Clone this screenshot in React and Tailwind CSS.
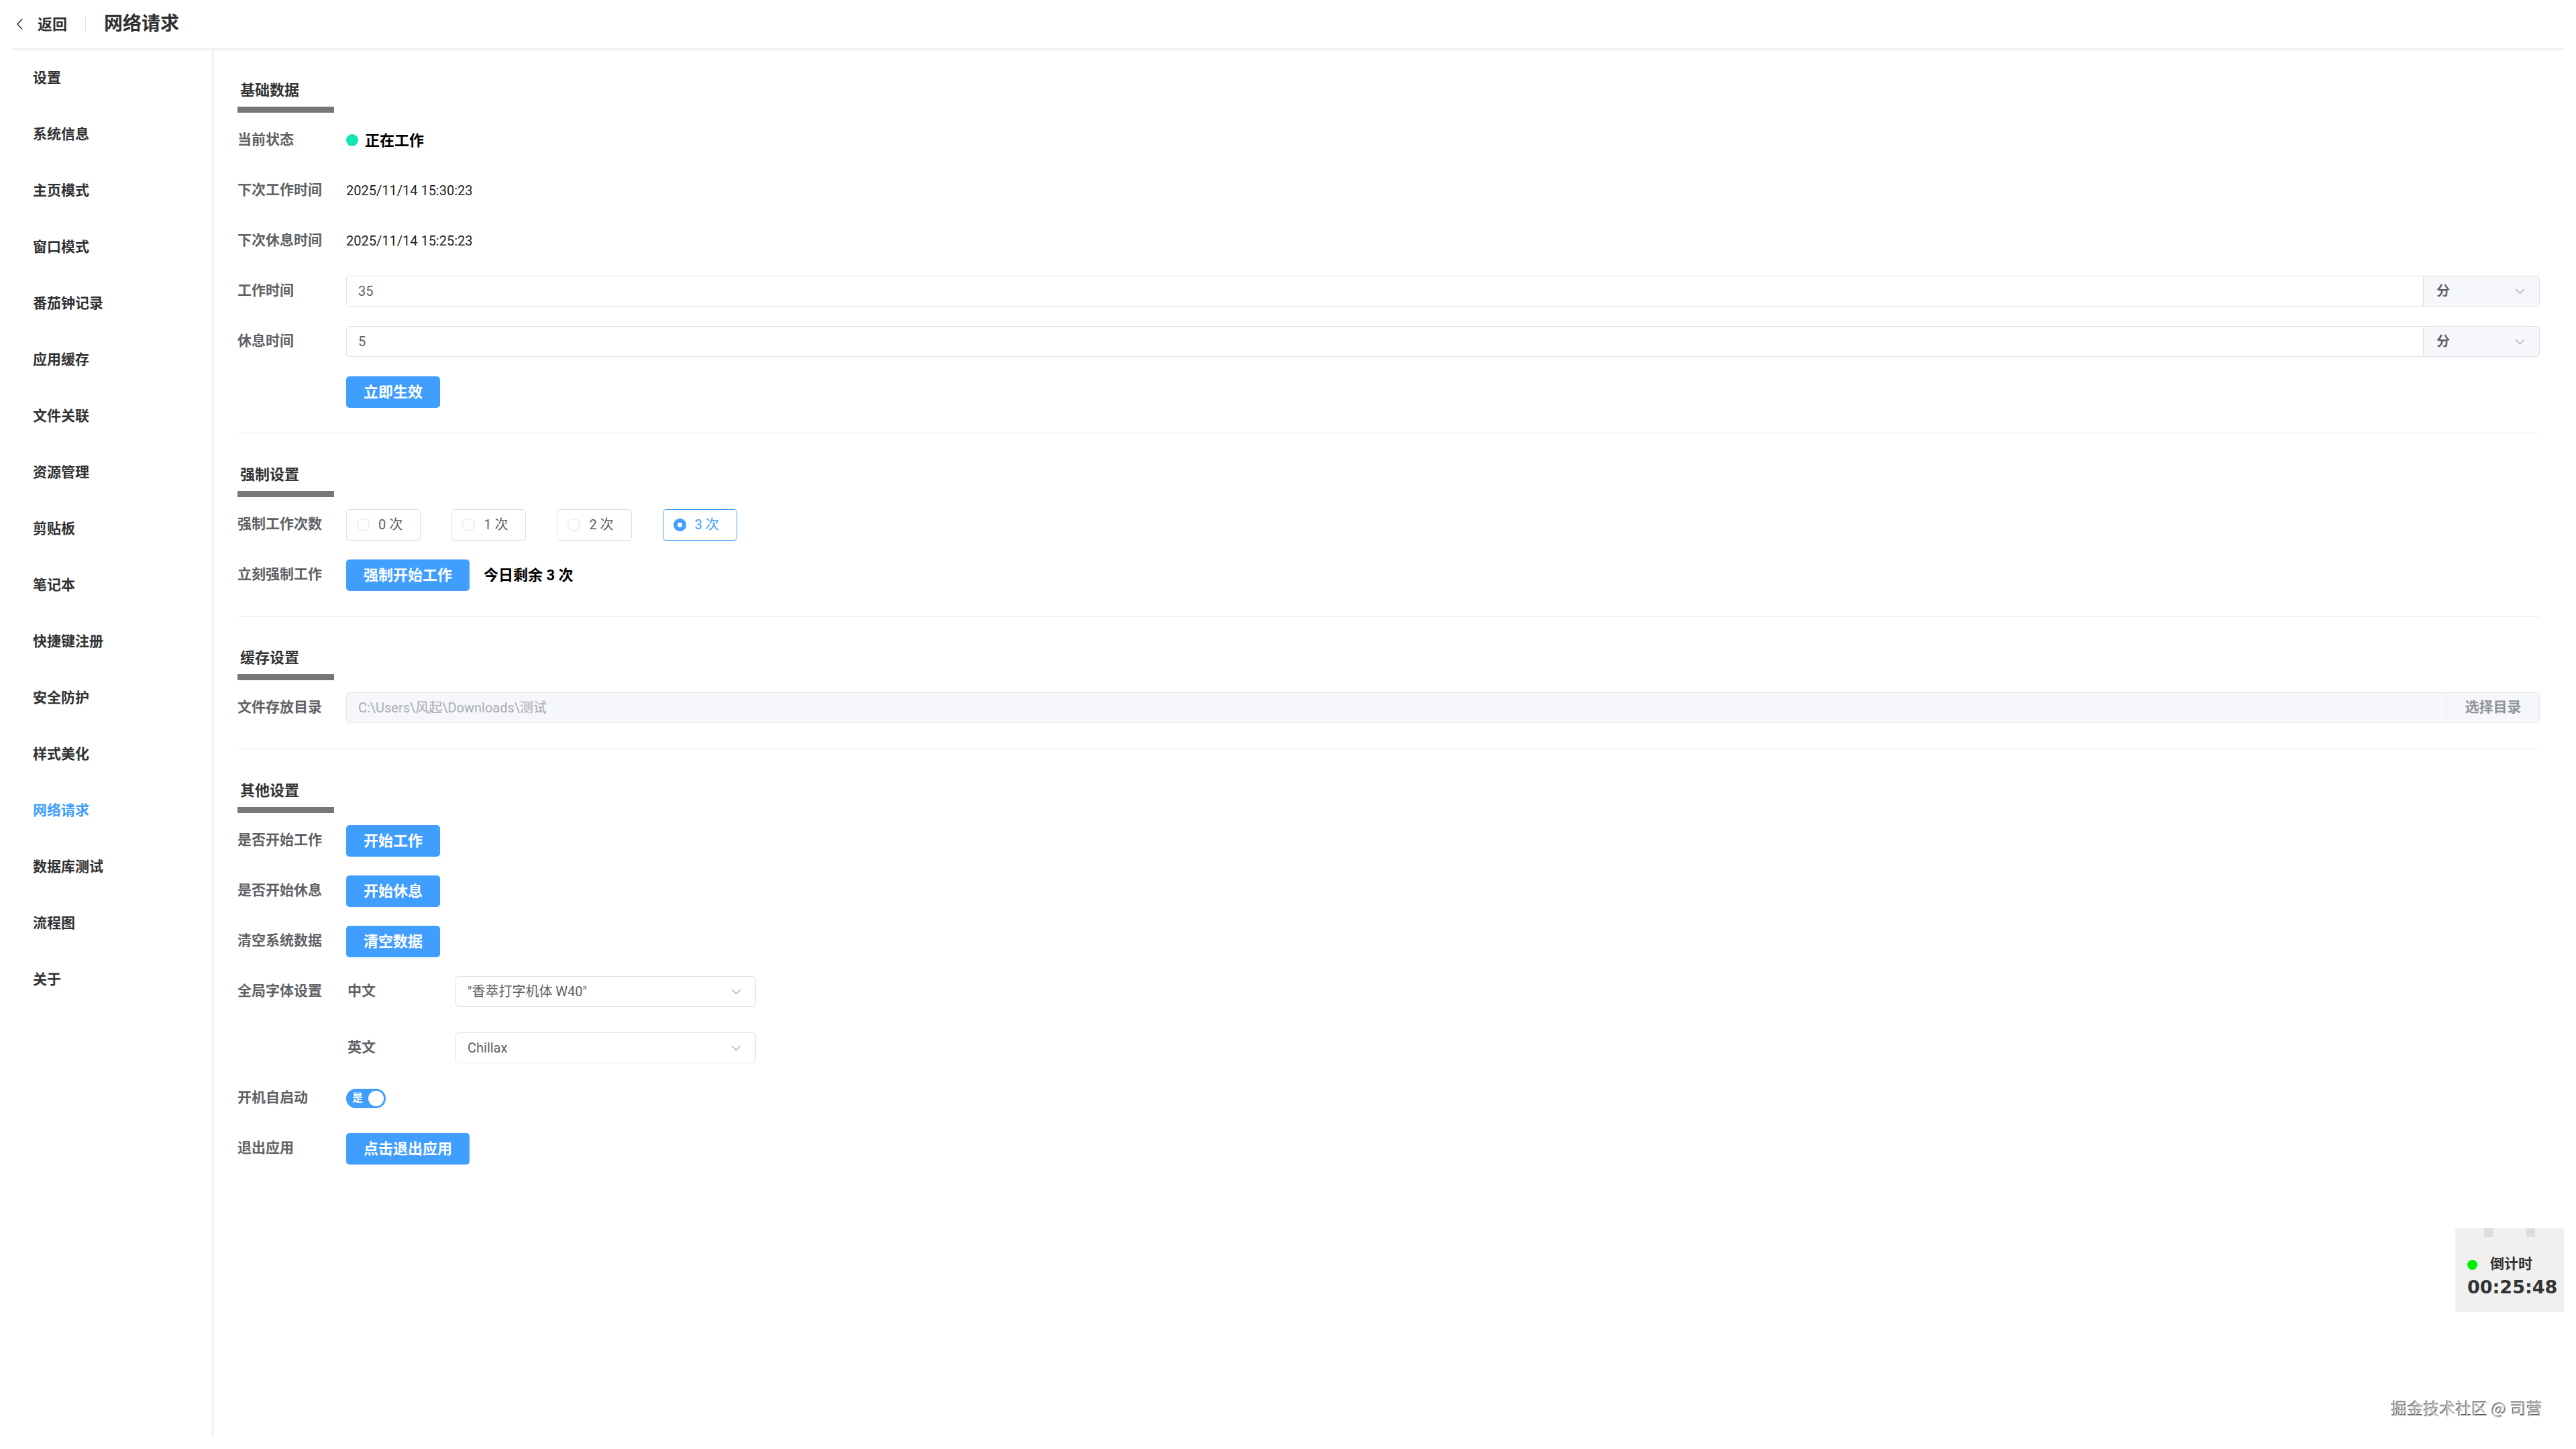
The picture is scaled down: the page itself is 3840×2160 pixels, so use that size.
import React from "react";

const menu = [
  "设置",
  "系统信息",
  "主页模式",
  "窗口模式",
  "番茄钟记录",
  "应用缓存",
  "文件关联",
  "资源管理",
  "剪贴板",
  "笔记本",
  "快捷键注册",
  "安全防护",
  "样式美化",
  "网络请求",
  "数据库测试",
  "流程图",
  "关于",
];

function ChevronDown() {
  return (
    <svg width="15" height="9" viewBox="0 0 15 9" fill="none">
      <polyline points="1,1 7.5,7.5 14,1" stroke="#a8abb2" strokeWidth="1.3" />
    </svg>
  );
}

function SectionTitle({ children }) {
  return (
    <div className="w-[144px] pl-[4px] pb-[9px] border-b-[9px] border-[#777777]">
      <div className="h-[30px] leading-[30px] text-[22px] font-bold text-[#333333]">{children}</div>
    </div>
  );
}

function Section({ title, first, last, children }) {
  return (
    <div className={`${first ? "pt-[45px]" : "pt-[47px]"} ${last ? "" : "pb-[38px] border-b border-[#e4e7ed]"}`}>
      <SectionTitle>{title}</SectionTitle>
      <div className="mt-[18px] flex flex-col gap-[29px]">{children}</div>
    </div>
  );
}

function Row({ label, children }) {
  return (
    <div className="flex items-center h-[46px]">
      <div className="w-[162px] shrink-0 text-[21px] font-semibold text-[#606266]">{label}</div>
      <div className="flex-1 min-w-0 flex items-center">{children}</div>
    </div>
  );
}

function Button({ children }) {
  return (
    <button className="h-[47px] px-[26px] rounded-[5px] bg-[#409eff] text-white text-[22px] font-bold">
      {children}
    </button>
  );
}

function UnitInput({ value }) {
  return (
    <div className="flex-1 flex h-[46px]">
      <div className="flex-1 flex items-center pl-[17px] border border-[#dcdfe6] rounded-l-[5px] bg-white text-[20px] text-[#606266]">
        {value}
      </div>
      <div className="w-[173px] flex items-center justify-between pl-[19px] pr-[21px] border border-l-0 border-[#dcdfe6] rounded-r-[5px] bg-[#f5f7fa]">
        <span className="text-[20px] font-bold text-[#606266]">分</span>
        <ChevronDown />
      </div>
    </div>
  );
}

function Radio({ label, checked }) {
  return (
    <div
      className={`h-[47px] flex items-center pl-[15px] pr-[26px] mr-[46px] rounded-[5px] border ${
        checked ? "border-[#409eff]" : "border-[#dcdfe6]"
      }`}
    >
      {checked ? (
        <span className="w-[19px] h-[19px] rounded-full bg-[#409eff] flex items-center justify-center">
          <span className="w-[7px] h-[7px] rounded-full bg-white" />
        </span>
      ) : (
        <span className="w-[19px] h-[19px] rounded-full border border-[#dcdfe6] bg-white" />
      )}
      <span className={`ml-[13px] text-[20px] ${checked ? "text-[#409eff]" : "text-[#606266]"}`}>{label}</span>
    </div>
  );
}

function FontSelect({ value }) {
  return (
    <div className="w-[448px] h-[46px] flex items-center justify-between pl-[17px] pr-[21px] border border-[#dcdfe6] rounded-[5px] bg-white">
      <span className="text-[20px] text-[#606266]">{value}</span>
      <ChevronDown />
    </div>
  );
}

export default function App() {
  return (
    <div className="relative h-screen flex flex-col px-[18px] pb-[17px] bg-white font-['Roboto','Noto_Sans_CJK_SC',sans-serif] text-[#303133]">
      <header className="h-[75px] shrink-0 flex items-center border-b-[3px] border-[#efefef]">
        <svg className="ml-[5px]" width="13" height="18" viewBox="0 0 13 18" fill="none">
          <polyline points="10,1.5 3,9 10,16.5" stroke="#303133" strokeWidth="1.6" />
        </svg>
        <span className="ml-[20px] text-[22px] font-semibold text-[#303133]">返回</span>
        <span className="ml-[27px] w-px h-[23px] bg-[#dcdfe6]" />
        <span className="ml-[27px] text-[28px] font-bold text-[#303133]">网络请求</span>
      </header>

      <div className="flex-1 flex min-h-0">
        <aside className="w-[300px] shrink-0 border-r-2 border-[#ececec] pt-[21px] pl-[31px] flex flex-col gap-[42px]">
          {menu.map((m) => (
            <div
              key={m}
              className={`h-[42px] flex items-center text-[21px] font-bold ${
                m === "网络请求" ? "text-[#409eff]" : "text-[#303133]"
              }`}
            >
              {m}
            </div>
          ))}
        </aside>

        <main className="flex-1 min-w-0 pl-[36px] pr-[36px]">
          <Section title="基础数据" first>
            <Row label="当前状态">
              <span className="w-[18px] h-[18px] rounded-full bg-[#13e5b4]" />
              <span className="ml-[10px] text-[22px] font-bold text-black">正在工作</span>
            </Row>
            <Row label="下次工作时间">
              <span className="text-[20px] text-[#1f1f1f]">2025/11/14 15:30:23</span>
            </Row>
            <Row label="下次休息时间">
              <span className="text-[20px] text-[#1f1f1f]">2025/11/14 15:25:23</span>
            </Row>
            <Row label="工作时间">
              <UnitInput value="35" />
            </Row>
            <Row label="休息时间">
              <UnitInput value="5" />
            </Row>
            <Row label="">
              <Button>立即生效</Button>
            </Row>
          </Section>

          <Section title="强制设置">
            <Row label="强制工作次数">
              <Radio label="0 次" />
              <Radio label="1 次" />
              <Radio label="2 次" />
              <Radio label="3 次" checked />
            </Row>
            <Row label="立刻强制工作">
              <Button>强制开始工作</Button>
              <span className="ml-[21px] text-[22px] font-bold text-black">今日剩余 3 次</span>
            </Row>
          </Section>

          <Section title="缓存设置">
            <Row label="文件存放目录">
              <div className="flex-1 flex h-[46px]">
                <div className="flex-1 flex items-center pl-[17px] border border-[#e4e7ed] rounded-l-[5px] bg-[#f5f7fa] text-[20px] text-[#a8abb2]">
                  C:\Users\风起\Downloads\测试
                </div>
                <div className="w-[138px] flex items-center justify-center border border-l-0 border-[#e4e7ed] rounded-r-[5px] bg-[#f5f7fa] text-[21px] font-semibold text-[#909399]">
                  选择目录
                </div>
              </div>
            </Row>
          </Section>

          <Section title="其他设置" last>
            <Row label="是否开始工作">
              <Button>开始工作</Button>
            </Row>
            <Row label="是否开始休息">
              <Button>开始休息</Button>
            </Row>
            <Row label="清空系统数据">
              <Button>清空数据</Button>
            </Row>
            <div className="flex">
              <div className="w-[162px] shrink-0 h-[46px] flex items-center text-[21px] font-semibold text-[#606266]">
                全局字体设置
              </div>
              <div className="flex flex-col gap-[38px]">
                <div className="flex items-center h-[46px]">
                  <span className="w-[163px] pl-[2px] text-[21px] font-semibold text-[#606266]">中文</span>
                  <FontSelect value={'"香萃打字机体 W40"'} />
                </div>
                <div className="flex items-center h-[46px]">
                  <span className="w-[163px] pl-[2px] text-[21px] font-semibold text-[#606266]">英文</span>
                  <FontSelect value="Chillax" />
                </div>
              </div>
            </div>
            <Row label="开机自启动">
              <div className="w-[59px] h-[29px] rounded-full bg-[#409eff] flex items-center justify-between pl-[9px] pr-[3px]">
                <span className="text-[16px] font-bold text-white leading-none">是</span>
                <span className="w-[23px] h-[23px] rounded-full bg-white" />
              </div>
            </Row>
            <Row label="退出应用">
              <Button>点击退出应用</Button>
            </Row>
          </Section>
        </main>
      </div>

      <div className="absolute right-[18px] top-[1831px] w-[162px] h-[125px] bg-[#f0f0f0] pl-[18px] pt-[42px]">
        <span className="absolute left-[43px] top-0 w-[13px] h-[13px] bg-[#dddddd]" />
        <span className="absolute left-[106px] top-0 w-[13px] h-[13px] bg-[#dddddd]" />
        <div className="flex items-center h-[24px]">
          <span className="w-[15px] h-[15px] rounded-full bg-[#00f000]" />
          <span className="ml-[19px] text-[21px] font-semibold text-[#333333]">倒计时</span>
        </div>
        <div className="mt-[5px] font-['DejaVu_Sans',sans-serif] text-[27px] font-bold leading-[34px] text-[#333333]">
          00:25:48
        </div>
      </div>

      <div className="absolute right-[50px] top-[2081px] text-[24px] text-[#c9c9c9] [text-shadow:-1px_-1px_0_#555555,1px_1px_0_#ffffff] font-['Noto_Sans_CJK_SC',sans-serif]">
        掘金技术社区 @ 司营
      </div>
    </div>
  );
}
